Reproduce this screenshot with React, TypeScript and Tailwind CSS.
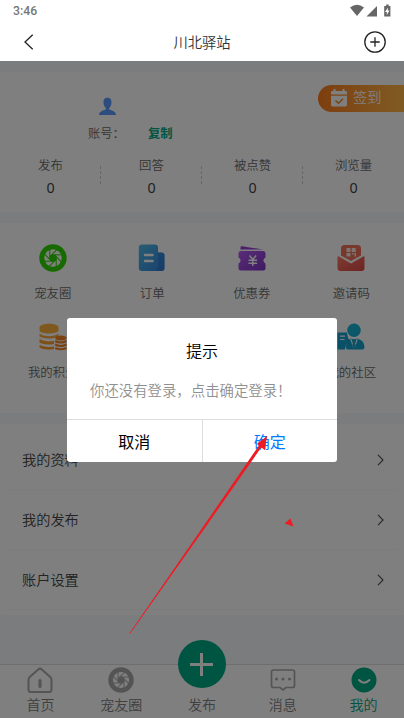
import type { ReactNode } from 'react';

const stats = ['发布', '回答', '被点赞', '浏览量'];
const menu = ['我的资料', '我的发布', '账户设置'];

function Aperture({ color, size }: { color: string; size: number }) {
  return (
    <svg width={size} height={size} viewBox="0 0 28 28" fill="none" stroke={color}>
      <circle cx="14" cy="14" r="11.2" strokeWidth="5" />
      <circle cx="14" cy="14" r="3.6" fill={color} stroke="none" />
      {[0, 45, 90, 135, 180, 225, 270, 315].map((a) => (
        <path key={a} d="M10.8 14.500V5" strokeWidth="1.1" transform={`rotate(${a} 14 14)`} />
      ))}
    </svg>
  );
}

function OrderIcon() {
  return (
    <svg width="28" height="28" viewBox="0 0 28 28">
      <defs>
        <linearGradient id="order" x1="0" y1="0" x2="1" y2="1">
          <stop offset="0" stopColor="#50bee4" />
          <stop offset="1" stopColor="#3080e0" />
        </linearGradient>
      </defs>
      <path d="M4 .5h13a3 3 0 0 1 3 3v5h3.500a3 3 0 0 1 3 3V24a3 3 0 0 1-3 3H4a3.200 3.200 0 0 1-3.200-3.200V3.700A3.200 3.200 0 0 1 4 .5z" fill="url(#order)" />
      <path d="M20 8.500h3.500a3 3 0 0 1 3 3V24a3 3 0 0 1-3 3H18q2-1 2-3z" fill="#2a66c4" opacity=".4" />
      <path d="M7 11h7.500M7 17h7.500" stroke="#fff" strokeWidth="2.500" strokeLinecap="round" />
    </svg>
  );
}

function CouponIcon() {
  return (
    <svg width="28" height="28" viewBox="0 0 28 28">
      <defs>
        <linearGradient id="coupon" x1="0" y1="0" x2="1" y2="1">
          <stop offset="0" stopColor="#b45af0" />
          <stop offset="1" stopColor="#7c34c4" />
        </linearGradient>
      </defs>
      <path d="M2.500 5.500V3.500q0-1.500 1.700-1.300L25 5.500z" fill="#9840d8" />
      <path d="M3 7h22q2.500 0 2.500 2.500v4a3.200 3.200 0 0 0 0 6V24q0 2.500-2.500 2.500H3Q.5 26.500.5 24v-4.500a3.200 3.200 0 0 0 0-6v-4Q.5 7 3 7z" fill="url(#coupon)" />
      <path d="M11.500 11.500l3.300 4 3.300-4M14.800 15.500v6.500M10.500 16.200h8.600M10.500 19.200h8.600" fill="none" stroke="#fff" strokeWidth="1.500" />
    </svg>
  );
}

function InviteIcon() {
  return (
    <svg width="28" height="28" viewBox="0 0 28 28">
      <defs>
        <linearGradient id="invite" x1="0" y1="0" x2="1" y2="1">
          <stop offset="0" stopColor="#fb7a62" />
          <stop offset="1" stopColor="#dc4848" />
        </linearGradient>
      </defs>
      <path d="M7.500 1h13q3.500 0 3.500 3.500V11.500L14 17 4 11.500V4.500Q4 1 7.500 1z" fill="#f07058" />
      <path d="M1 12l13 7.500L27 12q.5.500.5 1.500V24q0 3-3 3h-21q-3 0-3-3V13.500q0-1 .5-1.500z" fill="url(#invite)" />
      <path d="M9.500 4h4v4h-4zM14.700 4h4v4h-4zM9.500 9h4v3.500h-4zM15 9h1.500v1.500H15zM17.500 9H19v3.500h-1.500z" fill="#fff" opacity=".85" />
    </svg>
  );
}

function CoinsIcon() {
  return (
    <svg width="28" height="28" viewBox="0 0 28 28">
      <path d="M.5 4.500C.5-.5 19.500-.5 19.500 4.500v3c0 4-19 4-19 0z" fill="#ffb03c" />
      <path d="M.5 10.500c4 3.500 15 3.500 19 0v2l-4.500 2.500q-9 1.500-14.500-1.500z" fill="#ffa834" />
      <path d="M.5 16q5.500 3.500 14.500 2v3Q5 22.500.5 19.500z" fill="#ffa02c" />
      <path d="M.5 22q5.500 3 14.500 1.500v2.500q-10 1.500-14.500-1.500z" fill="#fc9824" />
      <ellipse cx="21.800" cy="15" rx="5.700" ry="2.500" fill="#f48420" />
      <path d="M16.200 18q5.500 3 11.200 0M16.200 21.500q5.500 3 11.200 0M16.200 25q5.500 2.600 11.200 0" fill="none" stroke="#f48420" strokeWidth="2" />
    </svg>
  );
}

function CommunityIcon() {
  return (
    <svg width="28" height="28" viewBox="0 0 28 28">
      <path d="M.5 9.500h9.500q.5 6 3 8-4 2.500-5 9H.5z" fill="#14a0cc" />
      <path d="M3 13.200h5M3 16.500h4.500" stroke="#fff" strokeWidth="1.200" />
      <circle cx="17" cy="7.300" r="6.700" fill="#14b0d4" />
      <path d="M9 24.500q0-7 5-9l3 1 3-1q7.500 1.500 7.500 9 0 2-2 2H11q-2 0-2-2z" fill="#14a0cc" />
      <path d="M13.800 16l2.700 8M20.200 16l-2.700 8" stroke="#fff" strokeWidth="1.100" />
      <path d="M15.500 16.500h3l-.8 2.500 1.100 3.500-1.800 2-1.800-2 1.100-3.500z" fill="#14a0cc" />
    </svg>
  );
}

function Chevron() {
  return (
    <svg width="7" height="12" viewBox="0 0 7 12" fill="none" stroke="#555" strokeWidth="1.200">
      <path d="M1 .8 6 6 1 11.200" />
    </svg>
  );
}

function Cell({ label, children }: { label: string; children?: ReactNode }) {
  return (
    <div className="flex h-[79px] flex-col items-center">
      <div className="h-7">{children}</div>
      <span className="mt-[11px] whitespace-nowrap text-[12.4px] leading-[20px] text-[#6a6a6a]">{label}</span>
    </div>
  );
}

function Tab({ label, active, children }: { label: string; active?: boolean; children?: ReactNode }) {
  return (
    <div className="flex flex-1 flex-col items-center pt-[2px]">
      <div className="h-[27px]">{children}</div>
      <span className={`whitespace-nowrap text-[14px] leading-[21px] ${active ? 'text-[#00a884]' : 'text-[#808080]'}`}>{label}</span>
    </div>
  );
}

export default function App() {
  return (
    <div className="relative flex h-[718px] w-[404px] flex-col overflow-hidden bg-[#f6f8fc] font-['Noto_Sans_CJK_SC','Noto_Sans',sans-serif] font-[350] text-[#333]">
      {/* status bar + title */}
      <header className="h-[61px] shrink-0 bg-white">
        <div className="flex h-[22px] items-center justify-between px-[13px] text-[#666]">
          <span className="font-['Roboto',sans-serif] text-[12.3px] font-medium leading-[22px] text-[#777]">3:46</span>
          <svg width="42" height="14" viewBox="0 0 42 14" fill="#666">
            <path d="M1 3.500Q8 -2 15 3.500L8 12z" />
            <path d="M28 2v10.500H17.500z" />
            <path d="M35.200 2h2V.5h2.500V2h1.700v10.500h-6.200z" />
            <path d="M39 3.500l-3 4.500h1.800V11l2.700-4.500h-1.700z" fill="#fff" />
          </svg>
        </div>
        <div className="grid h-[39px] grid-cols-3 items-center pr-[17px] pl-[17px]">
          <svg className="ml-[7px]" width="24" height="16" viewBox="0 0 24 16" fill="none" stroke="#222" strokeWidth="1.300">
            <path d="M8.700.7 1 8l7.700 7.300" />
          </svg>
          <h1 className="text-center text-[14.300px] leading-[22px]">川北驿站</h1>
          <svg className="justify-self-end" width="24" height="24" viewBox="0 0 24 24" fill="none" stroke="#222" strokeWidth="1.300">
            <circle cx="12" cy="12" r="10.200" />
            <path d="M12 7.300v9.400M7.300 12h9.400" />
          </svg>
        </div>
      </header>

      <main className="flex-1">
        <section className="mt-[11px] h-[140px] bg-white">
          <div className="relative h-[83px]">
            <div className="flex flex-col pt-[25px] pl-[88px]">
              <svg className="ml-[10px]" width="19" height="19" viewBox="0 0 19 19" fill="#5c9aff">
                <path d="M9.500.8c3 0 4 2 4 4.700 0 2.500-1 4.600-2.300 5.500v1.300c1.500 1.200 6.800 1.700 6.800 5.700H1c0-4 5.300-4.500 6.800-5.700V11c-1.300-.9-2.300-3-2.300-5.500 0-2.700 1-4.700 4-4.700z" />
              </svg>
              <div className="mt-[7px] flex text-[12.300px] leading-[20px]">
                <span className="w-[60px] text-[#6a6a6a]">账号：</span>
                <span className="font-bold text-[#00a884]">复制</span>
              </div>
            </div>
            <div className="absolute top-[13px] right-0 flex h-[27px] w-[86px] items-center rounded-l-full bg-linear-to-r from-[#fb7c1c] to-[#ffb648] pl-[13px] text-[14.300px] leading-[20px] text-white">
              <svg className="relative -top-px mr-[6px]" width="16" height="18" viewBox="0 0 16 18">
                <path d="M2.500 0h2v2h7V0h2v2H15q1 0 1 1v2.500H0V3q0-1 1-1h1.500zM0 6.800h16v9q0 1.700-1.700 1.700H1.700Q0 17.500 0 15.800z" fill="#fff" />
                <path d="M4.500 11.500l3 2.800 4.500-4.500" fill="none" stroke="#f48824" strokeWidth="1.500" />
              </svg>
              <span className="relative -top-[2px]">签到</span>
            </div>
          </div>
          <div className="grid grid-cols-4">
            {stats.map((s, i) => (
              <div key={s} className="relative flex flex-col items-center">
                <span className="text-[12.400px] leading-[20px] text-[#6a6a6a]">{s}</span>
                <span className="mt-[2px] font-['Noto_Sans',sans-serif] text-[14.300px] font-normal leading-[22px] text-[#444]">0</span>
                {i < 3 && <i className="absolute top-[11px] right-0 h-[18px] border-l border-dashed border-[#ccc]" />}
              </div>
            ))}
          </div>
        </section>

        <section className="mt-[11px] grid h-[190px] grid-cols-4 content-start bg-white px-[3px] pt-[21px]">
          <Cell label="宠友圈"><Aperture color="#2fd400" size={28} /></Cell>
          <Cell label="订单"><OrderIcon /></Cell>
          <Cell label="优惠券"><CouponIcon /></Cell>
          <Cell label="邀请码"><InviteIcon /></Cell>
          <Cell label="我的积分"><CoinsIcon /></Cell>
          <Cell label="" />
          <Cell label="" />
          <Cell label="我的社区"><CommunityIcon /></Cell>
        </section>

        <section className="mt-[11px] h-[191px] bg-white px-[5px] pt-[6px]">
          {menu.map((m) => (
            <div key={m} className="flex h-[60px] items-center justify-between border-b border-[#f9f9f9] pr-[15px] pl-[17px] text-[14.200px] text-[#444]">
              {m}
              <Chevron />
            </div>
          ))}
        </section>
      </main>

      <nav className="flex h-[54px] shrink-0 border-t border-[#dcdcdc] bg-white">
        <Tab label="首页">
          <svg width="26" height="27" viewBox="0 0 26 27" fill="none" stroke="#a8a8a8" strokeWidth="2">
            <path d="M11.500 2.200q1.500-1.200 3 0L23 9.700q1.500 1.300 1.500 3V22.500q0 2.500-2.500 2.500H4q-2.500 0-2.500-2.500V12.700q0-1.700 1.500-3z" />
            <path d="M13 13.500v6" strokeWidth="3" strokeLinecap="round" />
          </svg>
        </Tab>
        <Tab label="宠友圈"><Aperture color="#a8a8a8" size={26} /></Tab>
        <Tab label="发布">
          <div className="relative -top-[27px] flex size-12 items-center justify-center rounded-full bg-[#00a884]">
            <svg width="23" height="23" viewBox="0 0 23 23" stroke="#fff" strokeWidth="3">
              <path d="M11.500 0v23M0 11.500h23" />
            </svg>
          </div>
        </Tab>
        <Tab label="消息">
          <svg width="26" height="27" viewBox="0 0 26 27" fill="none" stroke="#a8a8a8" strokeWidth="1.700">
            <path d="M3.500 3h19q2 0 2 2v13.500q0 2-2 2H16l-3 2.500-3-2.500H3.500q-2 0-2-2V5q0-2 2-2z" />
            <path d="M6.500 12h.01M13 12h.01M19.500 12h.01" strokeWidth="3" strokeLinecap="round" />
          </svg>
        </Tab>
        <Tab label="我的" active>
          <svg width="26" height="27" viewBox="0 0 26 27">
            <circle cx="13" cy="13" r="12.500" fill="#00a884" />
            <path d="M8 13q5 5.500 10.500 0" fill="none" stroke="#fff" strokeWidth="2" strokeLinecap="round" />
          </svg>
        </Tab>
      </nav>

      {/* login prompt */}
      <div className="absolute inset-x-0 top-[61px] bottom-0 bg-black/50">
        <div className="mx-auto mt-[257px] flex h-[144px] w-[270px] flex-col rounded-[3px] bg-white">
          <h2 className="pt-[20px] text-center text-[16px] leading-[24px] text-black">提示</h2>
          <p className="mt-[17px] pl-[23px] text-[14.400px] leading-[22px] whitespace-nowrap text-[#909090]">你还没有登录，点击确定登录！</p>
          <div className="mt-auto flex h-[43px] border-t border-[#ddd] text-[16px]">
            <button className="flex-1 border-r border-[#ddd] pb-px font-normal text-black">取消</button>
            <button className="flex-1 pb-px font-normal text-[#007aff]">确定</button>
          </div>
        </div>
      </div>

      {/* pointer arrow */}
      <svg className="absolute top-[430px] left-[125px]" width="175" height="208" viewBox="125 430 175 208" fill="#ed1c24">
        <path d="M129.500 633.300 201.500 529 259 445.500 256.800 444 267 436 265 450 261.200 447.500 203.300 530.300 130 633.800z" />
        <path d="M290.500 518.500 293.500 526.500 284.500 523.500z" />
      </svg>
    </div>
  );
}
